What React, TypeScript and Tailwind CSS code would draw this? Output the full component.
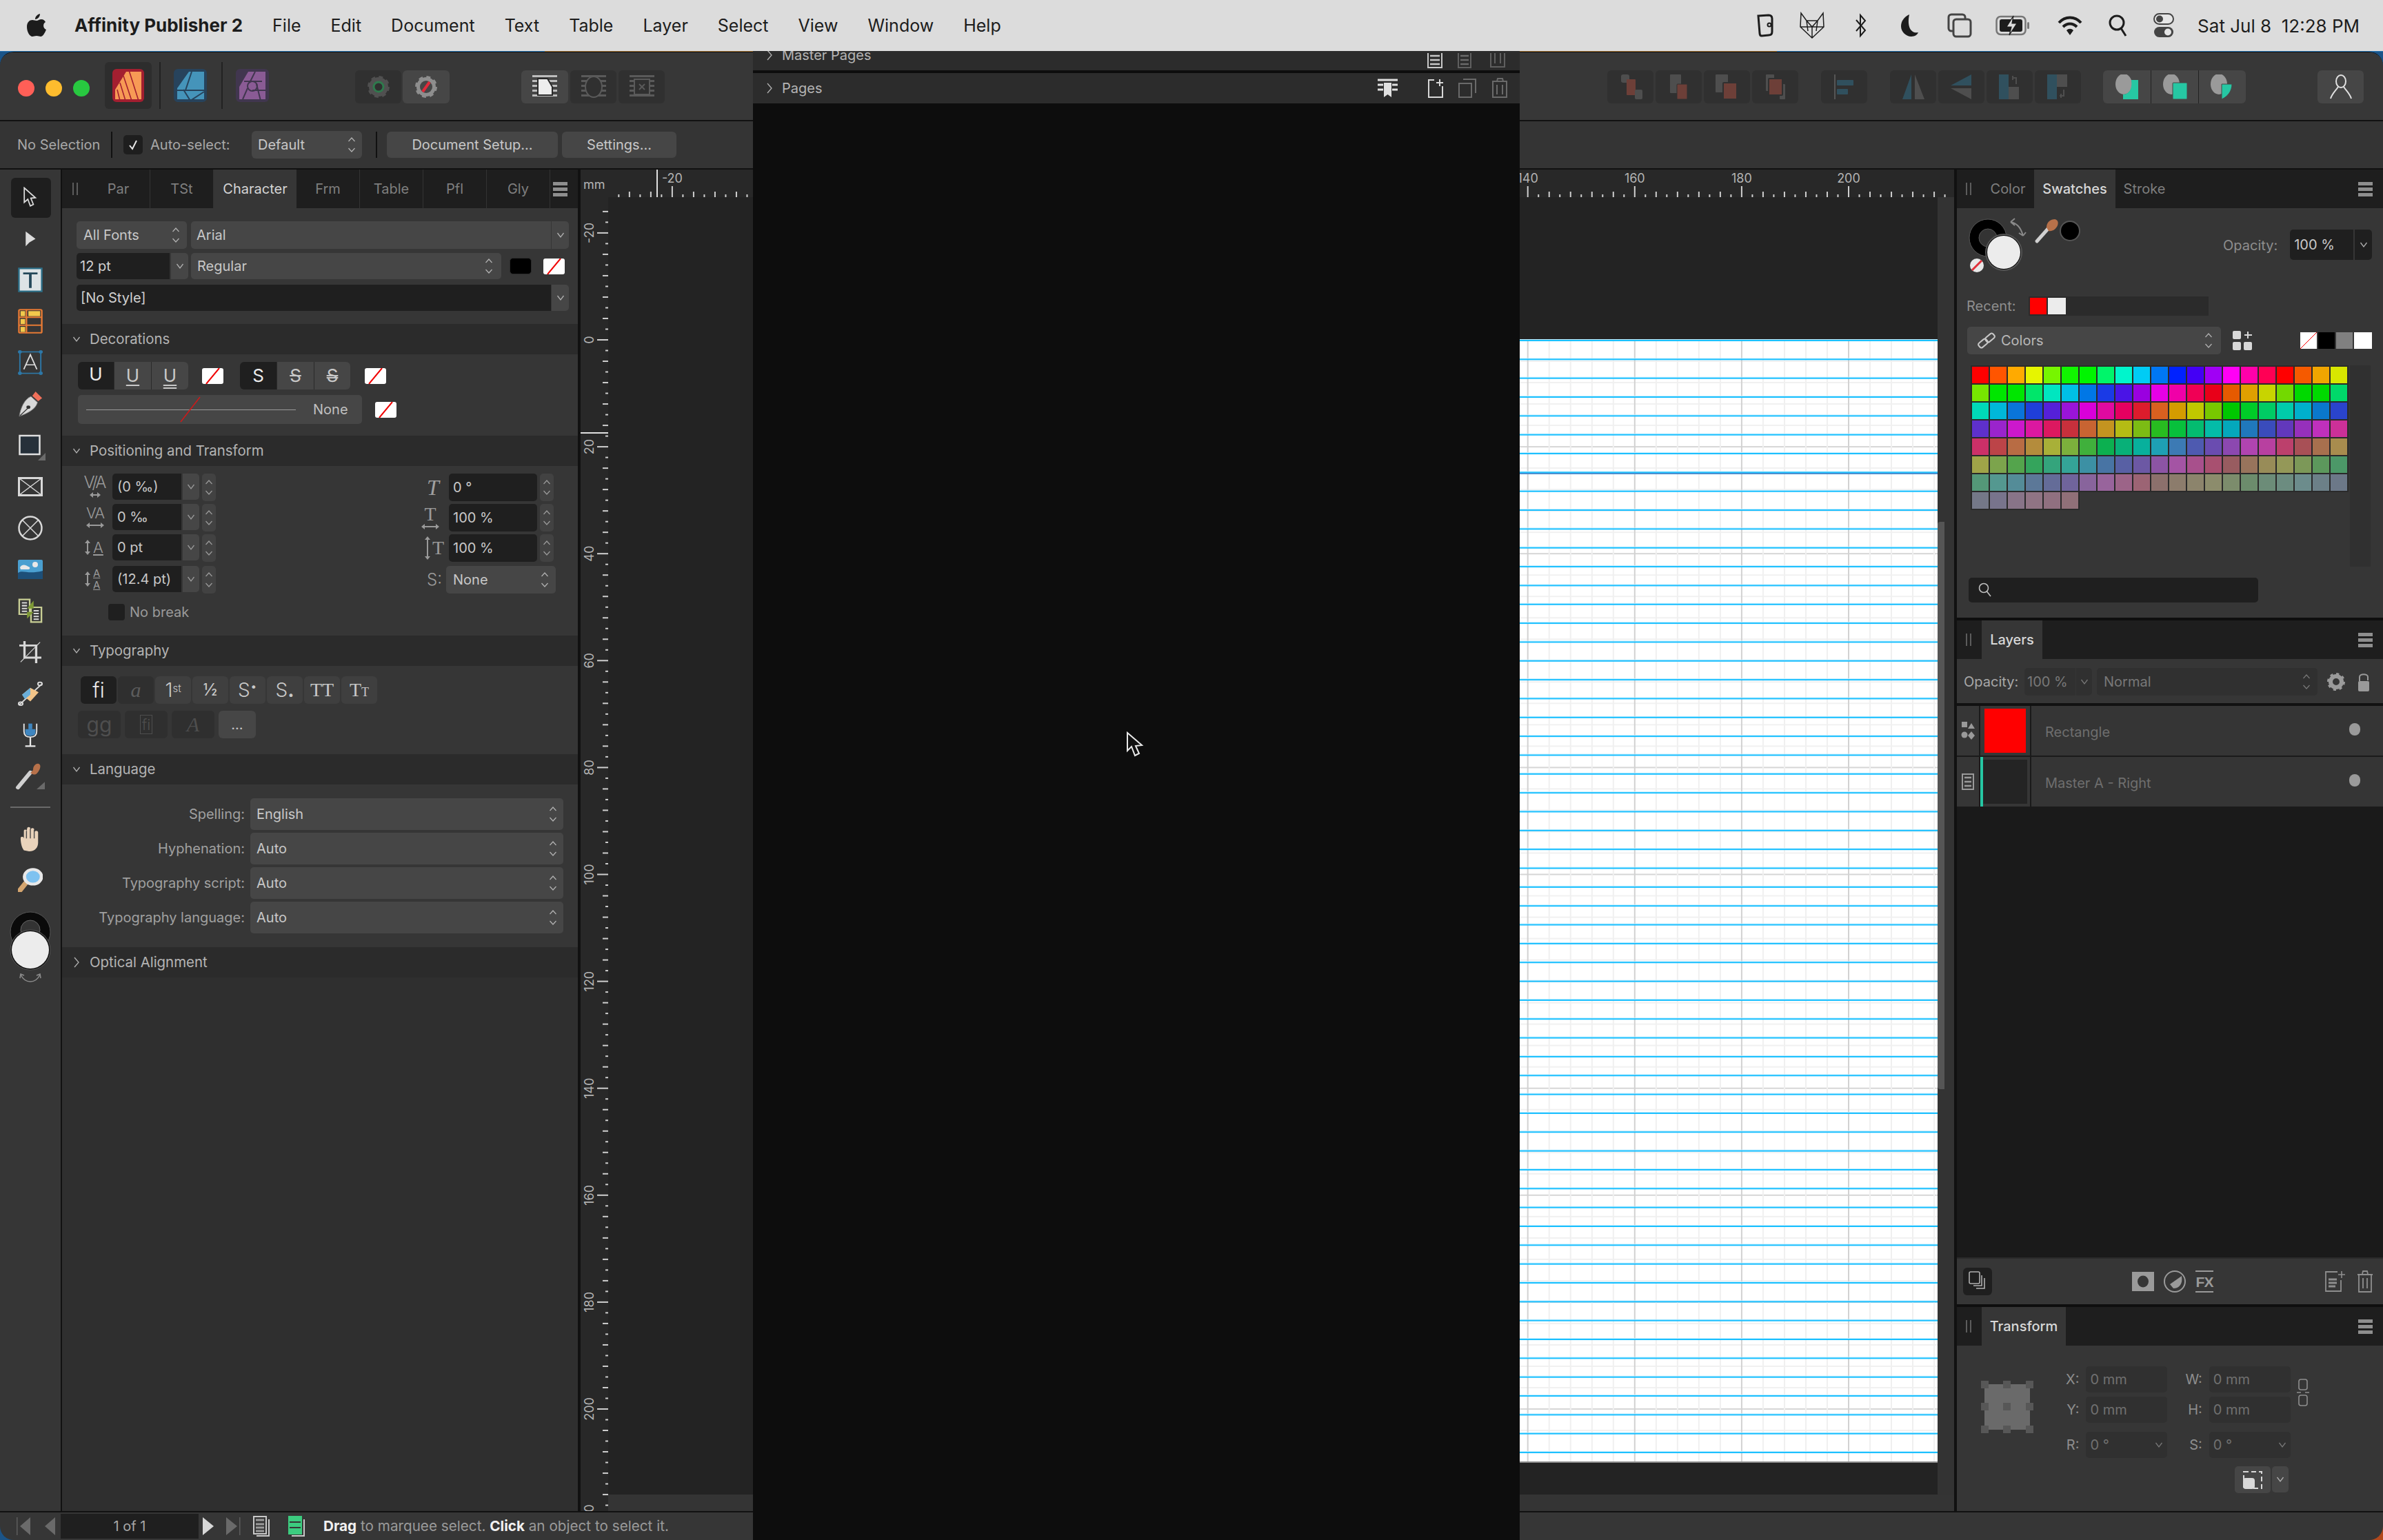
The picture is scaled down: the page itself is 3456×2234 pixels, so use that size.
import React from "react";

const sw: string[] = `#ff0000 #ff5500 #ffaa00 #e6f500 #77f500 #11f500 #00f500 #00f56a #00f5cc #00ccf5 #0077f5 #0022ff #4400f5 #a000f5 #ff00f5 #ff00aa #ff0055 #ff0000 #f55a00 #f0a500 #d8e600
#77e600 #00e600 #00e600 #00e66a #00e6c0 #00c0e6 #0077e6 #1a3ae6 #4a14e6 #9a00e0 #e600e6 #f000a8 #f00055 #e80018 #e65a00 #e0a000 #c8d400 #73d900 #00d900 #00d900 #00d96a
#00d9b8 #00b8d9 #0a75d9 #1f3fd9 #5520d9 #9a14d9 #d900d9 #e00aa0 #e60060 #dc1c2c #d96020 #d49c00 #c0c800 #78c800 #00c800 #00cc28 #00cc64 #00ccaa #00b0cc #0a78cc #2a44cc
#5e30cc #9a24cc #cc18cc #dc18a0 #dc1860 #c8303c #c86432 #c49420 #b4bc14 #7cbc14 #28bc20 #08c03c #04bc70 #04bca8 #04a8bc #2078bc #3a4cbc #6238bc #9630bc #c030bc #cc3098
#cc3068 #bc4448 #b86c44 #b48c3c #a8b038 #7cb03c #40b03c #0cb050 #08b078 #08b09c #1ea0b4 #3c7ab4 #4e5ab0 #6a4cb0 #8c48b0 #b044b0 #b840a0 #bc406c #a85056 #a8704e #a88c4e
#a0a448 #7ca44c #54a44c #34a45c #34a47c #34a498 #3c90a4 #4874a4 #5860a4 #6c58a4 #8c54a4 #a454a4 #a8508c #a85070 #985c60 #98745c #988c58 #949858 #7c9858 #5c985c #4c9868
#549878 #549890 #548c98 #5c7898 #646c98 #70649c #88649c #98649c #9c6488 #9c6474 #8c706c #8c7c6c #8c846c #8c8c6c #7c8c6c #6c8c6c #6c8c78 #6c8c80 #6c8c8c #6c8088 #6c7888
#747888 #78748c #887488 #907484 #907080 #907078`.split(/\s+/);

const UpDown = ({ c = "#b0b0b0" }: { c?: string }) => (
  <svg width="12" height="24" viewBox="0 0 12 24" fill="none" stroke={c} strokeWidth="1.3" className="shrink-0">
    <path d="M1.5 7 L6 2 L10.5 7 M1.5 17 L6 22 L10.5 17" />
  </svg>
);
const Down = ({ c = "#b0b0b0" }: { c?: string }) => (
  <svg width="12" height="10" viewBox="0 0 12 10" fill="none" stroke={c} strokeWidth="1.3" className="shrink-0">
    <path d="M1.5 2 L6 8 L10.5 2" />
  </svg>
);
const Right = () => (
  <svg width="10" height="16" viewBox="0 0 10 16" fill="none" stroke="#b0b0b0" strokeWidth="1.3" className="shrink-0">
    <path d="M2 1 L8 8 L2 15" />
  </svg>
);
const NoneSw = () => (
  <svg width="31" height="23" viewBox="0 0 31 23" className="shrink-0">
    <rect x="0" y="0" width="31" height="23" rx="3" fill="#fff" />
    <path d="M6 23 L25 0" stroke="#f00000" strokeWidth="2" />
  </svg>
);
const Burger = ({ className = "" }: { className?: string }) => (
  <div className={`flex flex-col gap-[3px] w-[21px] ${className}`}>
    <div className="h-[5px] bg-[#8e8e8e]" />
    <div className="h-[5px] bg-[#8e8e8e]" />
    <div className="h-[5px] bg-[#8e8e8e]" />
  </div>
);
const Grip = () => (
  <div className="flex gap-[4px] shrink-0">
    <div className="w-[2px] h-[18px] bg-[#5c5c5c]" />
    <div className="w-[2px] h-[18px] bg-[#5c5c5c]" />
  </div>
);

const ToolBtn = ({ w = 67, on = false, children }: { w?: number; on?: boolean; children?: React.ReactNode }) => (
  <div style={{ width: w }} className={`h-[48px] shrink-0 rounded-[6px] flex items-center justify-center ${on ? "bg-[#464646]" : "bg-[#303030]"}`}>
    {children}
  </div>
);

const Gear = ({ c, inner }: { c: string; inner: React.ReactNode }) => (
  <svg width="34" height="38" viewBox="0 0 34 38">
    <circle cx="17" cy="19" r="13.5" fill="none" stroke={c} strokeWidth="5" strokeDasharray="5.5 5.1" />
    <circle cx="17" cy="19" r="11" fill="none" stroke={c} strokeWidth="6" />
    {inner}
  </svg>
);

const Publisher = () => (
  <svg width="46" height="48" viewBox="0 0 46 48">
    <rect width="46" height="48" rx="6" fill="#a31f30" />
    <path d="M4 44 L4 30 L20 4 L42 4 L42 44 Z" fill="#f79a55" />
    <path d="M24 2 L38 46 M16 10 L28 46 M11 20 L19 46 M7 30 L11 46" stroke="#a31f30" strokeWidth="1.6" />
  </svg>
);
const Designer = () => (
  <svg width="48" height="48" viewBox="0 0 48 48">
    <rect width="48" height="48" rx="6" fill="#27435c" />
    <path d="M5 44 L5 28 L22 4 L44 4 L44 44 Z" fill="#4594ba" />
    <path d="M5 31 L17 31 L26 4 M17 31 L28 31 L44 31 M14 30 L24 46 L44 33" stroke="#27435c" strokeWidth="2" fill="none" />
  </svg>
);
const Photo = () => (
  <svg width="48" height="48" viewBox="0 0 48 48">
    <rect width="48" height="48" rx="6" fill="#41364f" />
    <path d="M5 44 L5 26 L18 4 L43 4 L43 44 Z" fill="#8a5b95" />
    <circle cx="24" cy="25" r="7" fill="none" stroke="#41364f" strokeWidth="2" />
    <path d="M12 18 L38 18 M28 4 L20 20 M43 31 L24 31 M30 22 L36 46 M17 28 L10 44" stroke="#41364f" strokeWidth="2" />
  </svg>
);

const Pv = ({ mode }: { mode: number }) => {
  const c = mode === 0 ? "#bdbdbd" : "#5a5a5a";
  return (
    <svg width="36" height="36" viewBox="0 0 36 36">
      {[0, 7, 14, 21, 28].map((y) => (
        <rect key={y} x="0" y={y + 1} width="36" height="3" fill={c} />
      ))}
      {mode === 0 && <path d="M8 6 L22 6 L29 18 L29 30 L8 30 Z" fill="#ededed" stroke="#2a2a2a" strokeWidth="2" />}
      {mode === 1 && <ellipse cx="18" cy="18" rx="12" ry="15" fill="#303030" stroke="#5a5a5a" strokeWidth="2" />}
      {mode === 2 && (
        <>
          <rect x="7" y="7" width="22" height="22" fill="#303030" stroke="#5a5a5a" strokeWidth="2" />
          <path d="M14 14 L22 22 M22 14 L14 22" stroke="#5a5a5a" strokeWidth="2" />
        </>
      )}
    </svg>
  );
};

const Arr = ({ kind }: { kind: number }) => {
  const g = "#4e4e4e";
  const r = "#6d3f38";
  return (
    <svg width="36" height="36" viewBox="0 0 36 36">
      {kind === 0 && (
        <>
          <rect x="4" y="0" width="12" height="12" rx="3" fill={g} />
          <rect x="12" y="7" width="13" height="23" rx="1" fill={r} />
          <rect x="24" y="22" width="11" height="14" rx="2" fill={g} />
        </>
      )}
      {kind === 1 && (
        <>
          <rect x="5" y="0" width="16" height="27" rx="1" fill={g} />
          <rect x="15" y="14" width="15" height="22" rx="1" fill={r} stroke="#303030" />
        </>
      )}
      {kind === 2 && (
        <>
          <rect x="1" y="0" width="18" height="26" rx="1" fill={g} />
          <rect x="12" y="12" width="20" height="24" rx="1" fill={r} stroke="#303030" strokeWidth="2" />
        </>
      )}
      {kind === 3 && (
        <>
          <rect x="4" y="0" width="12" height="24" rx="1" fill={g} />
          <rect x="24" y="14" width="8" height="22" rx="1" fill={g} />
          <rect x="8" y="6" width="20" height="24" rx="1" fill={r} stroke="#303030" strokeWidth="2" />
        </>
      )}
    </svg>
  );
};
const Flip = ({ kind }: { kind: number }) => {
  const b = "#30505e";
  const g = "#4e4e4e";
  return (
    <svg width="36" height="36" viewBox="0 0 36 36">
      {kind === 0 && (
        <>
          <path d="M15 0 L15 36 L2 36 Z" fill={b} />
          <path d="M20 0 L20 36 L34 36 Z" fill={g} />
        </>
      )}
      {kind === 1 && (
        <>
          <path d="M32 0 L2 16 L32 16 Z" fill={b} />
          <path d="M32 36 L2 20 L32 20 Z" fill={g} />
        </>
      )}
      {kind === 2 && (
        <>
          <rect x="2" y="0" width="14" height="36" fill={b} />
          <rect x="16" y="18" width="15" height="18" fill={g} />
          <path d="M22 5 L27 5 L27 14 M22 2 L22 8" stroke={g} strokeWidth="2" fill="none" />
        </>
      )}
      {kind === 3 && (
        <>
          <rect x="2" y="0" width="14" height="36" fill={b} />
          <rect x="16" y="0" width="15" height="18" fill={g} />
          <path d="M26 22 L26 31 L20 31 M22 28 L22 34" stroke={g} strokeWidth="2" fill="none" />
        </>
      )}
    </svg>
  );
};
const Bool = ({ kind }: { kind: number }) => (
  <svg width="36" height="36" viewBox="0 0 36 36">
    <ellipse cx="13" cy="14" rx="12" ry="15" fill="#9a9a9a" />
    {kind === 0 && <path d="M24 8 L34 8 L34 36 L12 36 L12 29 C20 29 26 22 24 8 Z" fill="#26c7a3" />}
    {kind === 1 && <rect x="15" y="12" width="21" height="24" rx="1" fill="#26c7a3" stroke="#464646" />}
    {kind === 2 && <path d="M17 14 L32 14 C32 24 26 32 17 36 Z" fill="#26c7a3" stroke="#464646" />}
  </svg>
);

const MI = ({ t, b }: { t: string; b?: boolean }) => (
  <span className={`leading-none whitespace-nowrap ${b ? "font-bold text-[26px]" : "font-normal text-[25px]"}`}>{t}</span>
);

const MenuBar = () => (
  <div className="h-[74px] shrink-0 bg-[#dcdcdc] flex items-center text-[#1c1c1c] relative z-20">
    <svg width="28" height="34" viewBox="0 0 28 34" className="ml-[39px] mr-[41px] shrink-0" fill="#1c1c1c">
      <path d="M19 0 C19 4 16 8 12 8 C12 4 15 1 19 0 Z M14 10 C16 10 18 8 21 8 C24 8 26 10 27 12 C23 14 23 21 28 23 C26 28 23 33 20 33 C18 33 17 32 14 32 C11 32 10 33 8 33 C4 33 0 26 0 19 C0 12 4 9 8 9 C10 9 12 10 14 10 Z" />
    </svg>
    <div className="flex items-center gap-[43px]">
      <MI t="Affinity Publisher 2" b />
      <MI t="File" />
      <MI t="Edit" />
      <MI t="Document" />
      <MI t="Text" />
      <MI t="Table" />
      <MI t="Layer" />
      <MI t="Select" />
      <MI t="View" />
      <MI t="Window" />
      <MI t="Help" />
    </div>
    <div className="ml-auto flex items-center pr-[34px]">
      <svg width="26" height="34" viewBox="0 0 26 34" fill="none" stroke="#1c1c1c" strokeWidth="3"><path d="M3 3 L18 2 C22 2 23 4 23 7 L23 26 C23 30 21 31 18 31 L8 32 C6 32 5 30 5 28 Z" /><circle cx="19" cy="16" r="2.5" fill="#dcdcdc" strokeWidth="2" /></svg>
      <svg width="40" height="40" viewBox="0 0 40 40" className="ml-[35px]" fill="none" stroke="#1c1c1c" strokeWidth="1.5"><path d="M4 2 L12 13 L28 13 L36 2 L37 22 L20 38 L3 22 Z M12 13 L20 22 L28 13 M3 22 L20 22 L37 22 M20 22 L20 38 M12 13 L14 28 M28 13 L26 28" /></svg>
      <svg width="20" height="38" viewBox="0 0 20 38" className="ml-[41px]" fill="none" stroke="#1c1c1c" strokeWidth="2"><path d="M3 11 L16 26 L9 34 L9 4 L16 12 L3 27" /></svg>
      <svg width="28" height="32" viewBox="0 0 28 32" className="ml-[46px]" fill="#1c1c1c"><path d="M14 0 C6 4 2 10 2 17 C2 25 9 32 17 32 C22 32 26 29 27 26 C18 28 10 20 14 0 Z" /></svg>
      <svg width="36" height="36" viewBox="0 0 36 36" className="ml-[41px]" fill="none" stroke="#444" strokeWidth="3"><rect x="2" y="2" width="24" height="24" rx="4" /><rect x="9" y="9" width="25" height="25" rx="4" fill="#dcdcdc" /></svg>
      <svg width="50" height="30" viewBox="0 0 50 30" className="ml-[34px]"><rect x="1.5" y="2" width="42" height="26" rx="6" fill="none" stroke="#777" strokeWidth="2.5" /><rect x="6" y="6" width="33" height="18" rx="3" fill="#1c1c1c" /><rect x="46" y="10" width="3" height="10" rx="1.5" fill="#777" /><path d="M26 1 L16 17 L23 17 L20 29 L31 12 L24 12 Z" fill="#dcdcdc" stroke="#1c1c1c" strokeWidth="1.2" /></svg>
      <svg width="36" height="30" viewBox="0 0 36 30" className="ml-[40px]" fill="none" stroke="#1c1c1c" strokeWidth="4"><path d="M2 11 C11 1 25 1 34 11 M8 17 C14 11 22 11 28 17" /><path d="M13 22 L18 29 L23 22 C20 19 16 19 13 22 Z" fill="#1c1c1c" stroke="none" /></svg>
      <svg width="28" height="34" viewBox="0 0 28 34" className="ml-[38px]" fill="none" stroke="#1c1c1c" strokeWidth="3"><circle cx="12" cy="13" r="10" /><path d="M18 21 L25 32" /></svg>
      <svg width="30" height="36" viewBox="0 0 30 36" className="ml-[37px]"><rect x="1" y="1" width="28" height="15" rx="7.5" fill="#e6e6e6" stroke="#444" strokeWidth="2" /><circle cx="9" cy="8.5" r="5" fill="#444" /><rect x="1" y="20" width="28" height="15" rx="7.5" fill="#444" /><circle cx="21" cy="27.5" r="5" fill="#e6e6e6" /></svg>
      <span className="text-[26px] whitespace-pre ml-[34px]">Sat Jul 8  12:28 PM</span>
    </div>
  </div>
);

const Toolbar = () => (
  <div className="h-[100px] shrink-0 flex items-start bg-[#373737] border-b-2 border-[#111] pl-[26px] pt-[14px]">
    <div className="flex gap-[16px] mt-[26px] shrink-0">
      <div className="w-[24px] h-[24px] rounded-full bg-[#ff5f57]" />
      <div className="w-[24px] h-[24px] rounded-full bg-[#febc2e]" />
      <div className="w-[24px] h-[24px] rounded-full bg-[#28c840]" />
    </div>
    <div className="ml-[22px] w-[68px] h-[68px] rounded-[6px] bg-[#2d2d2d] flex items-center justify-center shrink-0">
      <Publisher />
    </div>
    <div className="ml-[11px] w-[2px] h-[68px] bg-[#222] shrink-0" />
    <div className="ml-[19px] mt-[10px] shrink-0"><Designer /></div>
    <div className="ml-[21px] w-[2px] h-[68px] bg-[#222] shrink-0" />
    <div className="ml-[19px] mt-[10px] shrink-0"><Photo /></div>
    <div className="ml-[125px] mt-[12px] flex gap-[2px] shrink-0">
      <ToolBtn><Gear c="#505050" inner={<circle cx="17" cy="19" r="7" fill="#303030" stroke="#2f7a4d" strokeWidth="3" />} /></ToolBtn>
      <ToolBtn on w={68}><Gear c="#8e8e8e" inner={<><circle cx="17" cy="19" r="9" fill="#464646" /><path d="M12 26 L22 12" stroke="#e02a3a" strokeWidth="4" /></>} /></ToolBtn>
    </div>
    <div className="ml-[104px] mt-[12px] flex gap-[3px] shrink-0">
      <ToolBtn on w={68}><Pv mode={0} /></ToolBtn>
      <ToolBtn><Pv mode={1} /></ToolBtn>
      <ToolBtn><Pv mode={2} /></ToolBtn>
    </div>
    <div className="ml-[1367px] mt-[12px] flex gap-[3px] shrink-0">
      {[0, 1, 2, 3].map((k) => <ToolBtn key={k}><Arr kind={k} /></ToolBtn>)}
    </div>
    <div className="ml-[33px] mt-[12px] shrink-0">
      <ToolBtn>
        <svg width="30" height="36" viewBox="0 0 30 36">
          <rect x="0" y="0" width="2" height="36" fill="#555" />
          <rect x="4" y="8" width="24" height="8" rx="1" fill="#30505e" />
          <rect x="4" y="21" width="16" height="8" rx="1" fill="#30505e" />
        </svg>
      </ToolBtn>
    </div>
    <div className="ml-[33px] mt-[12px] flex gap-[3px] shrink-0">
      {[0, 1, 2, 3].map((k) => <ToolBtn key={k}><Flip kind={k} /></ToolBtn>)}
    </div>
    <div className="ml-[32px] mt-[12px] flex rounded-[6px] bg-[#464646] shrink-0">
      {[0, 1, 2].map((k) => (
        <div key={k} className={`w-[69px] h-[48px] flex items-center justify-center ${k ? "border-l border-[#222]" : ""}`}>
          <Bool kind={k} />
        </div>
      ))}
    </div>
    <div className="ml-[104px] mt-[12px] shrink-0">
      <ToolBtn on>
        <svg width="32" height="36" viewBox="0 0 32 36" fill="none" stroke="#e0e0e0" strokeWidth="2">
          <ellipse cx="16" cy="10" rx="7" ry="9" />
          <path d="M12 18 C8 24 3 28 1 35 M20 18 C24 24 29 28 31 35" />
        </svg>
      </ToolBtn>
    </div>
  </div>
);

const BtnLight = ({ w, children }: { w: number; children: React.ReactNode }) => (
  <div style={{ width: w }} className="h-[38px] rounded-[6px] bg-[#464646] text-[20px] text-[#c8c8c8] flex items-center justify-center shrink-0">
    {children}
  </div>
);

const ContextBar = () => (
  <div className="h-[68px] shrink-0 bg-[#343434] flex items-center text-[20px] border-b-2 border-[#111] box-content">
    <span className="ml-[25px] w-[136px] text-[#a8a8a8] whitespace-nowrap">No Selection</span>
    <div className="w-[2px] h-[38px] bg-[#111] shrink-0" />
    <div className="ml-[16px] w-[28px] h-[28px] rounded-[5px] bg-[#1e1e1e] flex items-center justify-center shrink-0">
      <svg width="14" height="16" viewBox="0 0 14 16" fill="none" stroke="#e8e8e8" strokeWidth="2"><path d="M2 9 L6 14 L12 2" /></svg>
    </div>
    <span className="ml-[11px] w-[147px] text-[#a8a8a8] whitespace-nowrap">Auto-select:</span>
    <div className="w-[160px] h-[40px] rounded-[6px] bg-[#464646] flex items-center justify-between pl-[9px] pr-[9px] text-[#c8c8c8] shrink-0"><span>Default</span><UpDown /></div>
    <div className="ml-[20px] w-[2px] h-[38px] bg-[#111] shrink-0" />
    <div className="ml-[14px] flex gap-[6px]">
      <BtnLight w={248}>Document Setup...</BtnLight>
      <BtnLight w={166}>Settings...</BtnLight>
    </div>
  </div>
);

const tools: React.ReactNode[] = [
  <svg key="a" width="22" height="30" viewBox="0 0 30 40" preserveAspectRatio="none" fill="#1e1e1e" stroke="#dcdcdc" strokeWidth="2.4"><path d="M3 2 L3 30 L10 24 L15 37 L21 34 L16 22 L25 21 Z" /></svg>,
  <svg key="b" width="18" height="23" viewBox="0 0 24 30" preserveAspectRatio="none" fill="#dcdcdc"><path d="M3 1 L3 29 L10 22 L22 15 Z" /></svg>,
  <svg key="c" width="36" height="36" viewBox="0 0 38 40" preserveAspectRatio="none"><rect x="1.5" y="1.5" width="35" height="37" fill="#dde3e6" stroke="#2d6f88" strokeWidth="2.5" /><path d="M8 8 L30 8 L30 11 L21 11 L21 33 L17 33 L17 11 L8 11 Z" fill="#24485a" /></svg>,
  <svg key="d" width="36" height="36" viewBox="0 0 38 44" preserveAspectRatio="none" fill="none"><rect x="1.5" y="1.5" width="35" height="41" rx="2" stroke="#e67a34" strokeWidth="2.5" /><path d="M1 15 L37 15 M1 29 L37 29 M13 1 L13 43" stroke="#e67a34" strokeWidth="2.5" /><rect x="4" y="4" width="7" height="9" fill="#f2c94c" /><rect x="16" y="4" width="18" height="9" fill="#f2c94c" /><rect x="4" y="18" width="7" height="9" fill="#f2c94c" /><rect x="4" y="32" width="7" height="9" fill="#f2c94c" /></svg>,
  <svg key="e" width="36" height="36" viewBox="0 0 38 44" preserveAspectRatio="none" fill="none"><rect x="3" y="3" width="32" height="38" stroke="#2d78a8" strokeWidth="2" /><circle cx="3" cy="3" r="3" fill="#2d78a8" /><circle cx="35" cy="3" r="3" fill="#2d78a8" /><circle cx="3" cy="41" r="3" fill="#2d78a8" /><circle cx="35" cy="41" r="3" fill="#2d78a8" /><path d="M9 34 L19 8 L29 34 M12 26 L26 26" stroke="#dcdcdc" strokeWidth="2" /></svg>,
  <svg key="f" width="36" height="36" viewBox="0 0 38 46" preserveAspectRatio="none"><path d="M27 0 L37 12 L31 18 L22 8 Z" fill="#f0705a" /><path d="M20 9 L30 20 C28 30 20 38 2 46 C4 30 10 14 20 9 Z" fill="#d8d8d8" stroke="#777" /><circle cx="16" cy="29" r="3" fill="#333" /><path d="M3 45 L15 31" stroke="#333" strokeWidth="1.5" /></svg>,
  <svg key="g" width="46" height="44" viewBox="0 0 46 44"><rect x="7.5" y="8" width="29" height="27" fill="#26303a" stroke="#e0e0e0" strokeWidth="2.5" /><path d="M45 33 L45 44 L34 44 Z" fill="#6a6a6a" /></svg>,
  <svg key="h" width="36" height="28" viewBox="0 0 36 28" fill="none" stroke="#d8d8d8"><rect x="1.5" y="1.5" width="33" height="25" strokeWidth="3" /><path d="M2 2 L34 26 M34 2 L2 26" strokeWidth="1.5" /></svg>,
  <svg key="i" width="36" height="36" viewBox="0 0 36 36" fill="none" stroke="#d8d8d8"><circle cx="18" cy="18" r="16.5" strokeWidth="2.5" /><path d="M6 6 L30 30 M30 6 L6 30" strokeWidth="1.5" /></svg>,
  <svg key="j" width="36" height="28" viewBox="0 0 36 28"><rect width="36" height="28" rx="2" fill="#4a9fd0" /><circle cx="25" cy="7" r="4" fill="#e8e8e8" /><path d="M3 11 C6 6 11 7 15 10 C18 10 18 14 15 14 L4 14 Z" fill="#e8e8e8" /><path d="M0 19 C8 14 14 22 36 16 L36 28 L0 28 Z" fill="#1d4f78" /></svg>,
  <svg key="k" width="36" height="36" viewBox="0 0 38 44" preserveAspectRatio="none" fill="none"><path d="M2 2 L18 2 L18 28 L2 28 Z M20 16 L36 16 L36 42 L20 42 Z" stroke="#c9cf95" strokeWidth="2.5" /><path d="M6 8 L14 8 M6 13 L14 13 M6 18 L14 18 M6 23 L14 23 M24 22 L32 22 M24 27 L32 27 M24 32 L32 32 M24 37 L32 37" stroke="#d8d8d8" strokeWidth="2.5" /><path d="M24 4 L24 18 L14 18 Z M14 24 L24 24 L14 36 Z" fill="#7e9a35" /></svg>,
  <svg key="l" width="32" height="32" viewBox="0 0 34 40" preserveAspectRatio="none" fill="none" stroke="#d8d8d8" strokeWidth="3.5"><path d="M8 0 L8 30 L34 30 M0 8 L26 8 L26 40" /><path d="M2 38 L32 2" strokeWidth="1.2" /></svg>,
  <svg key="m" width="36" height="36" viewBox="0 0 36 44" preserveAspectRatio="none"><path d="M2 42 L34 6" stroke="#ddd" strokeWidth="2" /><circle cx="4" cy="40" r="3" fill="none" stroke="#ddd" strokeWidth="2" /><circle cx="32" cy="5" r="3" fill="none" stroke="#ddd" strokeWidth="2" /><path d="M6 24 L18 12 L30 20 L18 36 Z" fill="#f3c488" /><path d="M6 24 L18 12 L18 24 L10 32 Z" fill="#6aaed8" /></svg>,
  <svg key="n" width="24" height="36" viewBox="0 0 26 44" preserveAspectRatio="none" fill="none"><path d="M3 2 L3 16 C3 24 8 26 13 26 C18 26 23 24 23 16 L23 2" stroke="#e8e8e8" strokeWidth="2" /><path d="M5 12 L21 12 L21 18 C21 22 17 24 13 24 C9 24 5 22 5 18 Z" fill="#3f86c0" /><path d="M13 2 L13 12" stroke="#3f86c0" strokeWidth="6" /><path d="M13 26 L13 41 M5 42 L21 42" stroke="#e8e8e8" strokeWidth="2.5" /></svg>,
  <svg key="o" width="44" height="40" viewBox="0 0 44 44" preserveAspectRatio="none"><path d="M4 40 L22 16" stroke="#d0d0d0" strokeWidth="6" strokeLinecap="round" /><path d="M26 12 C26 5 30 2 33 2 C36 2 38 6 35 12 C32 18 30 20 26 19 L22 17 Z" fill="#b7714a" /><path d="M43 31 L43 43 L31 43 Z" fill="#6a6a6a" /></svg>,
];

const ToolsCol = () => (
  <div className="w-[90px] shrink-0 border-r-2 border-[#111] bg-[#363636] flex flex-col items-center pt-[10px] relative">
    <div className="absolute left-[16px] top-[12px] w-[58px] h-[58px] rounded-[6px] bg-[#1e1e1e]" />
    {tools.map((t, i) => (
      <div key={i} className="relative h-[60px] w-full flex items-center justify-center shrink-0">{t}</div>
    ))}
    <div className="w-[58px] h-[2px] bg-[#6a6a6a] mt-[14px] shrink-0" />
    <div className="h-[59px] mt-[15px] flex items-center justify-center shrink-0">
      <svg width="30" height="36" viewBox="0 0 32 46" preserveAspectRatio="none"><path d="M6 44 C2 38 1 28 1 22 C1 18 5 18 6 22 L6 8 C6 5 10 5 10 8 L11 4 C11 0 16 0 16 4 L17 5 C17 2 22 2 22 6 L23 10 C23 7 28 7 28 11 L28 30 C28 38 24 46 14 46 Z" fill="#e9d3bb" /><path d="M10 8 L10 22 M16 4 L16 22 M22 6 L22 22" stroke="#4a4a4a" strokeWidth="1.5" /></svg>
    </div>
    <div className="h-[59px] flex items-center justify-center shrink-0">
      <svg width="36" height="36" viewBox="0 0 38 44" preserveAspectRatio="none"><path d="M3 41 L12 28" stroke="#d4a56f" strokeWidth="8" strokeLinecap="round" /><circle cx="23" cy="17" r="13" fill="#7ec2f0" stroke="#e8e8e8" strokeWidth="5" /></svg>
    </div>
    <div className="mt-[17px] flex flex-col items-center shrink-0 w-[60px]">
      <svg width="60" height="86" viewBox="0 0 60 86">
        <circle cx="30" cy="30" r="29" fill="#0a0a0a" stroke="#555" />
        <circle cx="30" cy="27" r="14" fill="#333" stroke="#666" />
        <circle cx="30" cy="56" r="29.5" fill="#555" />
        <circle cx="30" cy="56" r="28.5" fill="#111" />
        <circle cx="30" cy="56" r="27" fill="#ececec" />
      </svg>
      <svg width="32" height="14" viewBox="0 0 32 14" fill="none" stroke="#8a8a8a" strokeWidth="1.6" className="mt-[4px]"><path d="M2 2 C6 10 12 12 16 12 C20 12 26 10 30 2 M1 7 L2 1 L7 3 M31 7 L30 1 L25 3" /></svg>
    </div>
  </div>
);

const Section = ({ t, open = true }: { t: string; open?: boolean }) => (
  <div className="h-[44px] shrink-0 bg-[#2b2b2b] flex items-center text-[20.4px] text-[#b4b4b4]">
    <div className="w-[40px] flex justify-center pl-[2px]">{open ? <Down /> : <Right />}</div>
    <span className="whitespace-nowrap">{t}</span>
  </div>
);

const Tab = ({ t, w, on }: { t: string; w: number; on?: boolean }) => (
  <div style={{ width: w }} className={`h-full flex items-center justify-center shrink-0 text-[20px] ${on ? "bg-[#363636] text-[#d4d4d4]" : "text-[#7e7e7e] border-r border-[#333]"}`}>
    {t}
  </div>
);

const Seg = ({ t, on, w = 54, cl = "" }: { t: React.ReactNode; on?: boolean; w?: number; cl?: string }) => (
  <div style={{ width: w }} className={`h-[40px] flex items-center justify-center text-[26px] leading-none shrink-0 ${on ? "bg-[#1f1f1f] text-[#ececec]" : "bg-[#464646] text-[#c8c8c8]"} ${cl}`}>
    {t}
  </div>
);

const PosInput = ({ v }: { v: string }) => (
  <div className="flex items-start shrink-0">
    <div className="w-[100px] h-[38px] rounded-l-[5px] bg-[#1f1f1f] text-[#c8c8c8] text-[20px] flex items-center pl-[7px] whitespace-nowrap">{v}</div>
    <div className="ml-[2px] w-[24px] h-[38px] rounded-r-[5px] bg-[#464646] flex items-center justify-center"><Down c="#999" /></div>
    <div className="ml-[4px] w-[20px] h-[40px] rounded-[5px] bg-[#424242] flex items-center justify-center"><UpDown c="#999" /></div>
  </div>
);
const PosR = ({ v }: { v: string }) => (
  <div className="flex items-start shrink-0">
    <div className="w-[128px] h-[40px] rounded-[5px] bg-[#1f1f1f] text-[#c8c8c8] text-[20px] flex items-center pl-[6px]">{v}</div>
    <div className="ml-[4px] w-[20px] h-[40px] rounded-[5px] bg-[#424242] flex items-center justify-center"><UpDown c="#999" /></div>
  </div>
);
const HArrow = ({ w = 26 }: { w?: number }) => (
  <svg width={w} height="10" viewBox={`0 0 ${w} 10`} fill="#9a9a9a"><path d={`M0 5 L5 1 L5 4 L${w - 5} 4 L${w - 5} 1 L${w} 5 L${w - 5} 9 L${w - 5} 6 L5 6 L5 9 Z`} /></svg>
);
const VArrow = ({ h = 26 }: { h?: number }) => (
  <svg width="10" height={h} viewBox={`0 0 10 ${h}`} fill="#9a9a9a"><path d={`M5 0 L9 5 L6 5 L6 ${h - 5} L9 ${h - 5} L5 ${h} L1 ${h - 5} L4 ${h - 5} L4 5 L1 5 Z`} /></svg>
);

const LangRow = ({ l, v }: { l: string; v: string }) => (
  <div className="flex items-center h-[46px] mb-[4px] shrink-0">
    <span className="w-[273px] text-right pr-[8px] text-[20px] text-[#a0a0a0] whitespace-nowrap">{l}</span>
    <div className="w-[454px] h-[46px] rounded-[5px] bg-[#464646] flex items-center justify-between pl-[9px] pr-[9px] text-[20px] text-[#c8c8c8]"><span>{v}</span><UpDown /></div>
  </div>
);

const LeftPanel = () => (
  <div className="w-[752px] shrink-0 bg-[#2f2f2f] border-r-4 border-[#111] flex flex-col">
    <div className="h-[56px] shrink-0 bg-[#1e1e1e] flex items-center relative">
      <div className="w-[36px] pl-[15px]"><Grip /></div>
      <Tab t="Par" w={92} />
      <Tab t="TSt" w={92} />
      <Tab t="Character" w={120} on />
      <Tab t="Frm" w={92} />
      <Tab t="Table" w={92} />
      <Tab t="Pfl" w={92} />
      <Tab t="Gly" w={92} />
      <Burger className="ml-[4px]" />
    </div>

    <div className="h-[168px] shrink-0 bg-[#363636] pt-[19px] pl-[21px] text-[20px]">
      <div className="flex h-[40px] gap-[6px]">
        <div className="w-[160px] rounded-[5px] bg-[#464646] flex items-center justify-between pl-[10px] pr-[10px] text-[#c8c8c8]"><span>All Fonts</span><UpDown /></div>
        <div className="w-[522px] rounded-l-[5px] bg-[#464646] flex items-center pl-[8px] text-[#c8c8c8]">Arial</div>
        <div className="w-[25px] -ml-[5px] rounded-r-[5px] bg-[#464646] flex items-center justify-center"><Down /></div>
      </div>
      <div className="flex h-[38px] mt-[6px] items-center">
        <div className="w-[135px] h-full rounded-l-[5px] bg-[#1f1f1f] flex items-center pl-[5px] text-[#d0d0d0]">12 pt</div>
        <div className="ml-[2px] w-[25px] h-full rounded-r-[5px] bg-[#464646] flex items-center justify-center"><Down /></div>
        <div className="ml-[4px] w-[450px] h-full rounded-[5px] bg-[#464646] flex items-center justify-between pl-[9px] pr-[12px] text-[#c8c8c8]"><span>Regular</span><UpDown /></div>
        <div className="ml-[12px] w-[32px] h-[24px] rounded-[5px] bg-black border border-[#2c2c2c]" />
        <div className="ml-[17px]"><NoneSw /></div>
      </div>
      <div className="flex h-[38px] mt-[8px]">
        <div className="w-[688px] rounded-l-[5px] bg-[#1f1f1f] flex items-center pl-[6px] text-[#d0d0d0]">[No Style]</div>
        <div className="ml-[1px] w-[25px] rounded-r-[5px] bg-[#464646] flex items-center justify-center"><Down /></div>
      </div>
    </div>

    <Section t="Decorations" />
    <div className="h-[118px] shrink-0 bg-[#363636] pl-[23px] pt-[11px]">
      <div className="flex items-center h-[40px]">
        <Seg t={<span className="-mt-[4px]">U</span>} on w={52} cl="rounded-l-[6px]" />
        <Seg t={<span className="underline underline-offset-4 decoration-2">U</span>} cl="border-l border-[#2a2a2a]" />
        <Seg t={<span className="underline decoration-double underline-offset-4">U</span>} cl="border-l border-[#2a2a2a] rounded-r-[6px]" />
        <div className="ml-[20px]"><NoneSw /></div>
        <div className="ml-[24px] flex">
          <Seg t="S" on w={53} cl="rounded-l-[6px]" />
          <Seg t={<span className="line-through">S</span>} cl="border-l border-[#2a2a2a]" />
          <Seg t={<span className="line-through decoration-double">S</span>} w={53} cl="border-l border-[#2a2a2a] rounded-r-[6px]" />
        </div>
        <div className="ml-[21px]"><NoneSw /></div>
      </div>
      <div className="flex items-center h-[42px] mt-[8px]">
        <div className="w-[412px] h-full rounded-[5px] bg-[#464646] flex items-center pl-[12px] text-[20px] text-[#c0c0c0] relative">
          <div className="w-[304px] h-[1px] bg-[#9a9a9a]" />
          <svg width="30" height="38" viewBox="0 0 30 38" className="absolute left-[148px] top-[2px]"><path d="M1 37 L29 1" stroke="#d01818" strokeWidth="1.5" /></svg>
          <span className="ml-[25px]">None</span>
        </div>
        <div className="ml-[19px]"><NoneSw /></div>
      </div>
    </div>

    <Section t="Positioning and Transform" />
    <div className="h-[246px] shrink-0 bg-[#363636] relative text-[#9a9a9a]">
      <div className="flex pt-[11px] pl-[32px]">
        <div className="w-[41px] flex flex-col items-start shrink-0">
          <div className="h-[38px] w-[32px] flex flex-col items-center text-[24px] leading-[26px] font-light"><span className="tracking-[-3px] -ml-[3px]">V/A</span><HArrow w={16} /></div>
          <div className="h-[38px] mt-[6px] w-[32px] flex flex-col items-center text-[22px] leading-[26px] font-light"><span className="tracking-[-1px]">VA</span><HArrow /></div>
          <div className="h-[38px] mt-[6px] w-[32px] flex items-center text-[22px] gap-[3px] font-light"><VArrow h={22} /><span className="underline">A</span></div>
          <div className="h-[38px] mt-[8px] w-[32px] flex items-center gap-[3px]"><VArrow h={22} /><div className="flex flex-col text-[15px] leading-[17px]"><span className="underline">A</span><span className="underline">A</span></div></div>
        </div>
        <div className="flex flex-col shrink-0">
          <PosInput v="(0 ‰)" />
          <div className="mt-[4px]"><PosInput v="0 ‰" /></div>
          <div className="mt-[4px]"><PosInput v="0 pt" /></div>
          <div className="mt-[6px]"><PosInput v="(12.4 pt)" /></div>
        </div>
        <div className="ml-[292px] flex flex-col shrink-0">
          <div className="h-[40px] flex items-center"><span className="w-[46px] pl-[14px] font-['Liberation_Serif',serif] italic text-[32px] text-[#a0a0a0]">T</span><PosR v="0 °" /></div>
          <div className="mt-[4px] h-[40px] flex items-center"><div className="w-[46px] flex flex-col items-center font-['Liberation_Serif',serif] text-[28px] leading-[26px] pr-[8px]"><span>T</span><HArrow /></div><PosR v="100 %" /></div>
          <div className="mt-[4px] h-[40px] flex items-center"><div className="w-[46px] flex items-center pl-[10px] font-['Liberation_Serif',serif] text-[28px] gap-[2px]"><VArrow h={34} /><span>T</span></div><PosR v="100 %" /></div>
          <div className="mt-[6px] h-[40px] flex items-center -ml-[4px]">
            <span className="w-[46px] pl-[18px] text-[24px] font-light">S:</span>
            <div className="w-[159px] h-[40px] rounded-[5px] bg-[#464646] flex items-center justify-between pl-[10px] pr-[10px] text-[20px] text-[#c8c8c8]"><span>None</span><UpDown /></div>
          </div>
        </div>
      </div>
      <div className="mt-[12px] ml-[67px] flex items-center text-[20px] gap-[7px]">
        <div className="w-[24px] h-[24px] rounded-[4px] bg-[#1f1f1f]" />
        <span>No break</span>
      </div>
    </div>

    <Section t="Typography" />
    <div className="h-[128px] shrink-0 bg-[#363636] pt-[15px] pl-[27px]">
      <div className="flex gap-[2px]">
        <Seg t="fi" on w={52} cl="rounded-[6px] font-light !text-[30px]" />
        <Seg t={<span className="font-['Liberation_Serif',serif] italic text-[#5c5c5c] text-[30px]">a</span>} w={52} cl="rounded-[6px] !bg-[#2f2f2f]" />
        {[
          <span key="1" className="font-light text-[28px]">1<sup className="text-[15px]">st</sup></span>,
          <span key="2" className="text-[24px]">½</span>,
          <span key="3" className="font-light text-[28px]">S<sup className="text-[18px]">•</sup></span>,
          <span key="4" className="font-light text-[28px]">S<span className="font-bold">.</span></span>,
          <span key="5" className="font-['Liberation_Serif',serif] text-[28px]">TT</span>,
          <span key="6" className="font-['Liberation_Serif',serif] text-[28px]">T<span className="text-[18px]">T</span></span>,
        ].map((x, i) => <Seg key={i} t={x} w={52} cl="rounded-[6px] !bg-[#3f3f3f]" />)}
      </div>
      <div className="flex gap-[6px] mt-[10px] -ml-[4px]">
        <Seg t={<span className="text-[#4e4e4e] text-[30px]">gg</span>} w={62} cl="rounded-[6px] !bg-[#2f2f2f]" />
        <Seg t={<span className="text-[#4e4e4e] font-light border border-[#4e4e4e] text-[22px] leading-[26px] px-[2px]">fi</span>} w={62} cl="rounded-[6px] !bg-[#2f2f2f]" />
        <Seg t={<span className="text-[#4e4e4e] font-['Liberation_Serif',serif] italic text-[30px]">A</span>} w={62} cl="rounded-[6px] !bg-[#2f2f2f]" />
        <Seg t={<span className="text-[20px]">...</span>} w={54} cl="rounded-[6px]" />
      </div>
    </div>

    <Section t="Language" />
    <div className="h-[236px] shrink-0 bg-[#363636] pt-[20px]">
      <LangRow l="Spelling:" v="English" />
      <LangRow l="Hyphenation:" v="Auto" />
      <LangRow l="Typography script:" v="Auto" />
      <LangRow l="Typography language:" v="Auto" />
    </div>
    <Section t="Optical Alignment" open={false} />
  </div>
);

const PX = 7.755;
const hTicks: number[] = [];
for (let m = -36; m <= 220; m += 2) hTicks.push(m);
const vTicks: number[] = [];
for (let m = -24; m <= 220; m += 2) vTicks.push(m);

const HRuler = () => (
  <svg width="1992" height="40" viewBox="0 0 1992 40" className="block shrink-0">
    <rect width="1992" height="40" fill="#282828" />
    {hTicks.map((m) => {
      const x = 288 + m * PX;
      if (x < 40 || x > 1980) return null;
      const h = m % 20 === 0 ? 16 : m % 4 === 0 ? 8 : 4;
      return <rect key={m} x={x - 1} y={40 - h} width="2" height={h} fill="#cfcfcf" />;
    })}
    {hTicks.filter((m) => m % 20 === 0).map((m) => {
      const x = 288 + m * PX;
      if (x < 60 || x > 1980) return null;
      return <text key={m} x={x} y="19" textAnchor="middle" fontSize="18" fill="#b4b4b4" fontFamily="Inter, sans-serif">{m}</text>;
    })}
    <text x="4" y="28" fontSize="18" fill="#b4b4b4" fontFamily="Inter, sans-serif">mm</text>
    <rect x="110" y="0" width="2" height="40" fill="#e0e0e0" />
  </svg>
);
const VRuler = () => (
  <svg width="40" height="1906" viewBox="0 0 40 1906" className="block shrink-0">
    <rect width="40" height="1906" fill="#282828" />
    {vTicks.map((m) => {
      const y = 207 + m * PX;
      if (y < 0) return null;
      const h = m % 20 === 0 ? 16 : m % 4 === 0 ? 8 : 4;
      return <rect key={m} x={40 - h} y={y - 1} width={h} height="2" fill="#cfcfcf" />;
    })}
    {vTicks.filter((m) => m % 20 === 0).map((m) => {
      const y = 207 + m * PX;
      return <text key={m} transform={`translate(19 ${y}) rotate(-90)`} textAnchor="middle" fontSize="18" fill="#b4b4b4" fontFamily="Inter, sans-serif">{m}</text>;
    })}
    <rect x="0" y="341" width="40" height="2" fill="#e0e0e0" />
  </svg>
);

const CELL = 31.02;
const pageV: number[] = [];
for (let i = 0; i * CELL < 1680; i++) pageV.push(i);
const pageH: number[] = [];
for (let i = 0; i * CELL < 1628; i++) pageH.push(i);
const blues: number[] = [];
for (let i = 0; 1.5 + i * 27.34 < 1628; i++) blues.push(i);

const PageGrid = () => (
  <svg width="1680" height="1630" viewBox="0 0 1680 1630" className="block">
    <rect width="1680" height="1630" fill="#fff" />
    {pageH.map((i) => {
      const y = 1 + i * CELL;
      return <rect key={i} x="0" y={y - 1} width="1680" height="2" fill={i % 5 === 0 ? "#d6d6d6" : "#f1f1f1"} />;
    })}
    {pageV.map((i) => {
      const x = i * CELL;
      return <rect key={i} x={x - 1} y="0" width="2" height="1628" fill={i % 5 === 0 ? "#d2d2d2" : "#f0f0f0"} />;
    })}
    {blues.map((i) => (
      <g key={i}>
        <rect x="0" y={i * 27.34} width="1680" height="1" fill="#c8f0ff" />
        <rect x="0" y={1 + i * 27.34} width="1680" height="2" fill="#18bfff" />
      </g>
    ))}
    <rect x="0" y="194" width="1680" height="2" fill="#4a90d0" />
    <rect x="0" y="1628" width="1680" height="2" fill="#909090" />
  </svg>
);

const Canvas = () => (
  <div className="w-[1992px] shrink-0 flex flex-col bg-[#343434]">
    <HRuler />
    <div className="flex flex-1 min-h-0">
      <VRuler />
      <div className="flex-1 flex flex-col min-w-0">
        <div className="flex h-[1882px] shrink-0">
          <div className="w-[1928px] bg-[#232323] pl-[248px] pt-[206px] overflow-hidden">
            <PageGrid />
          </div>
          <div className="w-[24px] pt-[471px] bg-[#333]">
            <div className="w-[10px] h-[823px] rounded-l-[4px] bg-[#555]" />
          </div>
        </div>
      </div>
    </div>
  </div>
);

const PTab = ({ t, w, on, cl = "" }: { t: string; w: number; on?: boolean; cl?: string }) => (
  <div style={{ width: w }} className={`h-full flex items-center justify-center shrink-0 text-[20px] ${on ? "bg-[#363636] text-[#d8d8d8] font-medium" : "text-[#7e7e7e]"} ${cl}`}>{t}</div>
);

const WheelGroup = () => (
  <svg width="180" height="96" viewBox="0 0 180 96">
    <circle cx="31" cy="35" r="27" fill="#000" stroke="#555" />
    <circle cx="31" cy="35" r="13" fill="#333" stroke="#555" />
    <circle cx="54" cy="56" r="27" fill="#555" />
    <circle cx="54" cy="56" r="25" fill="#000" />
    <circle cx="54" cy="56" r="24" fill="#ececec" />
    <circle cx="15" cy="75" r="10" fill="#e8e8e8" />
    <path d="M8 82 L22 68" stroke="#e0303a" strokeWidth="3" />
    <path d="M64 12 C72 14 78 18 82 32 M64 12 L70 7 M64 12 L70 17 M82 32 L76 28 M82 32 L86 27" stroke="#8a8a8a" strokeWidth="2" fill="none" />
    <path d="M102 40 L118 22" stroke="#d0d0d0" strokeWidth="5" strokeLinecap="round" />
    <path d="M116 20 C116 12 122 8 128 8 C133 9 134 14 131 19 C128 24 123 26 119 25 Z" fill="#b7714a" />
    <circle cx="150" cy="25" r="14" fill="#000" stroke="#555" strokeWidth="2" />
  </svg>
);

const RightPanel = () => (
  <div className="flex-1 min-w-0 bg-[#1a1a1a] border-l-4 border-[#111] flex flex-col">
    <div className="h-[56px] shrink-0 bg-[#1e1e1e] flex items-center relative">
      <div className="w-[36px] pl-[13px]"><Grip /></div>
      <PTab t="Color" w={76} />
      <PTab t="Swatches" w={118} on />
      <PTab t="Stroke" w={84} />
      <Burger className="ml-auto mr-[15px]" />
    </div>
    <div className="h-[594px] shrink-0 bg-[#363636] flex flex-col text-[20px]">
      <div className="h-[128px] shrink-0 flex items-start pl-[14px] pt-[8px]">
        <WheelGroup />
        <span className="ml-[192px] mt-[31px] text-[#8e8e8e] whitespace-nowrap">Opacity:</span>
        <div className="ml-[18px] mt-[23px] w-[92px] h-[44px] rounded-l-[5px] bg-[#1f1f1f] flex items-center pl-[6px] text-[#c8c8c8]">100 %</div>
        <div className="ml-[2px] mt-[23px] w-[25px] h-[44px] rounded-r-[5px] bg-[#1f1f1f] flex items-center justify-center"><Down /></div>
      </div>
      <div className="h-[28px] shrink-0 flex items-center pl-[14px]">
        <span className="w-[90px] text-[#8e8e8e]">Recent:</span>
        <div className="w-[261px] h-full bg-[#2b2b2b] flex items-center pl-[2px] gap-[2px]">
          <div className="w-[24px] h-[24px] bg-[#ff0000]" />
          <div className="w-[26px] h-[24px] bg-[#ececec]" />
        </div>
      </div>
      <div className="h-[40px] mt-[16px] shrink-0 flex items-center pl-[15px]">
        <div className="w-[368px] h-full rounded-[5px] bg-[#464646] flex items-center pl-[15px] pr-[12px] text-[#b8b8b8]">
          <svg width="26" height="26" viewBox="0 0 26 26" fill="none" stroke="#c8c8c8" strokeWidth="2"><rect x="1" y="13" width="14" height="8" rx="3" transform="rotate(-40 8 17)" /><rect x="11" y="5" width="14" height="8" rx="3" transform="rotate(-40 18 9)" /></svg>
          <span className="ml-[8px]">Colors</span>
          <div className="ml-auto"><UpDown /></div>
        </div>
        <svg width="30" height="28" viewBox="0 0 30 28" className="ml-[17px]" fill="#d8d8d8"><rect x="0" y="0" width="12" height="12" rx="2" /><rect x="0" y="16" width="12" height="12" rx="2" /><rect x="16" y="16" width="12" height="12" rx="2" /><path d="M21 1 L23 1 L23 5 L28 5 L28 7 L23 7 L23 11 L21 11 L21 7 L17 7 L17 5 L21 5 Z" /></svg>
        <div className="ml-[68px] flex gap-[2px]">
          <svg width="24" height="24" viewBox="0 0 24 24"><rect width="24" height="24" fill="#fff" /><path d="M0 24 L24 0" stroke="#f00" strokeWidth="1" /></svg>
          <div className="w-[24px] h-[24px] bg-black" />
          <div className="w-[24px] h-[24px] bg-[#808080]" />
          <div className="w-[26px] h-[24px] bg-white" />
        </div>
      </div>
      <div className="h-[324px] shrink-0 flex items-start pl-[22px] pt-[18px]">
        <div className="grid grid-cols-[repeat(21,24px)] gap-[2px] w-[544px] shrink-0">
          {sw.map((c, i) => (
            <div key={i} style={{ background: c }} className="w-[24px] h-[24px] outline-2 outline-[#2a2a2a]" />
          ))}
        </div>
        <div className="ml-[4px] w-[30px] h-[292px] bg-[#303030] shrink-0 -mt-[2px]" />
      </div>
      <div className="h-[36px] ml-[17px] w-[420px] rounded-[5px] bg-[#1f1f1f] flex items-center pl-[14px] shrink-0">
        <svg width="20" height="22" viewBox="0 0 20 22" fill="none" stroke="#c0c0c0" strokeWidth="1.6"><circle cx="8" cy="8" r="6.5" /><path d="M12.5 13 L18 20" /></svg>
      </div>
    </div>
    <div className="h-[4px] shrink-0 bg-[#0e0e0e]" />

    <div className="h-[56px] shrink-0 bg-[#1e1e1e] flex items-center">
      <div className="w-[36px] pl-[13px]"><Grip /></div>
      <PTab t="Layers" w={88} on />
      <Burger className="ml-auto mr-[15px]" />
    </div>
    <div className="h-[64px] shrink-0 bg-[#363636] flex items-center pl-[10px] pt-[2px] text-[20px]">
      <span className="text-[#a8a8a8] w-[88px] whitespace-nowrap">Opacity:</span>
      <div className="w-[74px] h-[40px] rounded-l-[5px] bg-[#303030] flex items-center pl-[4px] text-[#787878] whitespace-nowrap">100 %</div>
      <div className="ml-[1px] w-[23px] h-[40px] rounded-r-[5px] bg-[#303030] flex items-center justify-center"><Down c="#777" /></div>
      <div className="ml-[7px] w-[320px] h-[40px] rounded-[5px] bg-[#303030] flex items-center justify-between pl-[10px] pr-[10px] text-[#787878]"><span>Normal</span><UpDown c="#777" /></div>
      <svg width="26" height="26" viewBox="0 0 26 26" className="ml-[14px]"><circle cx="13" cy="13" r="8" fill="none" stroke="#9a9a9a" strokeWidth="6" /><circle cx="13" cy="13" r="11" fill="none" stroke="#9a9a9a" strokeWidth="4" strokeDasharray="4 4.6" /></svg>
      <svg width="18" height="28" viewBox="0 0 18 28" className="ml-[18px]"><rect x="1" y="13" width="16" height="15" rx="2" fill="#9a9a9a" /><path d="M3 13 L3 7 C3 2 15 2 15 7 L15 12" stroke="#9a9a9a" strokeWidth="2" fill="none" /></svg>
    </div>
    <div className="h-[4px] shrink-0 bg-[#111]" />
    <div className="h-[72px] shrink-0 flex gap-[2px] text-[20px] text-[#6e6e6e]">
      <div className="w-[32px] bg-[#363636] flex items-center justify-center">
        <svg width="20" height="26" viewBox="0 0 20 26" fill="#9a9a9a"><rect x="1" y="0" width="8" height="8" /><path d="M15 2 L20 10 L10 10 Z" /><circle cx="5" cy="19" r="4.5" /><path d="M15 14 L20 20 L15 26 L10 20 Z" /></svg>
      </div>
      <div className="w-[72px] bg-[#363636] flex items-center justify-center"><div className="w-[60px] h-[64px] bg-[#ff0000]" /></div>
      <div className="flex-1 bg-[#353535] flex items-center pl-[20px] relative">
        <span className="mt-[4px]">Rectangle</span>
        <div className="absolute right-[33px] top-[25px] w-[16px] h-[18px] rounded-full bg-[#9a9a9a]" />
      </div>
    </div>
    <div className="h-[2px] shrink-0 bg-[#1a1a1a]" />
    <div className="h-[72px] shrink-0 flex gap-[2px] text-[20px] text-[#6e6e6e]">
      <div className="w-[32px] bg-[#363636] flex items-center justify-center">
        <svg width="18" height="24" viewBox="0 0 18 24" fill="none" stroke="#9a9a9a" strokeWidth="2"><rect x="1" y="1" width="16" height="22" /><path d="M4 6 L14 6 M4 12 L14 12 M4 18 L14 18" strokeWidth="2.5" /></svg>
      </div>
      <div className="w-[72px] bg-[#363636] flex items-center">
        <div className="w-[4px] h-full bg-[#26c7a3]" />
        <div className="w-[64px] h-[64px] bg-[#242424]" />
      </div>
      <div className="flex-1 bg-[#353535] flex items-center pl-[20px] relative">
        <span className="mt-[4px]">Master A - Right</span>
        <div className="absolute right-[33px] top-[25px] w-[16px] h-[18px] rounded-full bg-[#9a9a9a]" />
      </div>
    </div>
    <div className="flex-1 min-h-0 bg-[#1a1a1a]" />
    <div className="h-[68px] shrink-0 bg-[#363636] flex items-center pl-[9px] border-t-[2px] border-[#2a2a2a]">
      <div className="w-[42px] h-[40px] rounded-[6px] bg-[#1f1f1f] flex items-center justify-center">
        <svg width="26" height="30" viewBox="0 0 26 30" fill="none" stroke="#b0b0b0" strokeWidth="1.6"><rect x="1" y="1" width="15" height="17" rx="2" /><path d="M19 6 L19 21 L7 21 M23 10 L23 25 L11 25" /></svg>
      </div>
      <svg width="32" height="28" viewBox="0 0 32 28" className="ml-[203px]"><rect width="32" height="28" fill="#9a9a9a" /><ellipse cx="16" cy="14" rx="8" ry="8.5" fill="#363636" /></svg>
      <svg width="32" height="32" viewBox="0 0 32 32" className="ml-[14px]"><ellipse cx="16" cy="16" rx="15" ry="15" fill="none" stroke="#9a9a9a" strokeWidth="2" /><path d="M26 8 C28 20 22 26 14 26 L9 20 Z" fill="#9a9a9a" /></svg>
      <div className="ml-[14px] w-[26px] h-[32px] border-y-2 border-[#9a9a9a] flex items-center justify-center font-['Liberation_Sans',sans-serif] font-bold text-[#9a9a9a] text-[21px] tracking-[-1px] leading-none">FX</div>
      <svg width="30" height="32" viewBox="0 0 30 32" className="ml-[161px]" fill="none" stroke="#8e8e8e" strokeWidth="1.8"><path d="M19 2 L2 2 L2 30 L24 30 L24 14" /><path d="M6 13 L18 13 M6 18 L18 18 M6 23 L16 23" strokeWidth="3" /><path d="M25 1 L25 11 M20 6 L30 6" strokeWidth="1.6" /></svg>
      <svg width="24" height="32" viewBox="0 0 24 32" className="ml-[17px]" fill="none" stroke="#8e8e8e" strokeWidth="1.8"><path d="M1 6 L23 6 M8 5 L9 1 L15 1 L16 5 M3 7 L3 31 L21 31 L21 7 M9 11 L9 26 M15 11 L15 26" /></svg>
    </div>
    <div className="h-[4px] shrink-0 bg-[#0e0e0e]" />
    <div className="h-[56px] shrink-0 bg-[#1e1e1e] flex items-center">
      <div className="w-[36px] pl-[13px]"><Grip /></div>
      <PTab t="Transform" w={122} on />
      <Burger className="ml-auto mr-[15px]" />
    </div>
    <div className="h-[240px] shrink-0 bg-[#363636] relative text-[20px] text-[#8e8e8e]">
      <div className="flex items-start pt-[30px] pl-[35px]">
        <svg width="76" height="76" viewBox="0 0 76 76" className="mt-[21px] shrink-0">
          <rect x="5" y="5" width="66" height="66" fill="#6a6a6a" />
          {[0, 32, 65].map((x) => [0, 32, 65].map((y) => <rect key={`${x}-${y}`} x={x} y={y} width="11" height="11" fill="#575757" />))}
        </svg>
        <div className="ml-[47px] grid grid-cols-[auto_118px_auto_118px] gap-x-[10px] gap-y-[6px] items-center">
          <span className="text-right">X:</span>
          <div className="h-[38px] rounded-[5px] bg-[#303030] flex items-center pl-[6px] text-[#707070]">0 mm</div>
          <span className="text-right ml-[16px]">W:</span>
          <div className="h-[38px] rounded-[5px] bg-[#303030] flex items-center pl-[6px] text-[#707070]">0 mm</div>
          <span className="text-right">Y:</span>
          <div className="h-[38px] rounded-[5px] bg-[#303030] flex items-center pl-[6px] text-[#707070]">0 mm</div>
          <span className="text-right">H:</span>
          <div className="h-[38px] rounded-[5px] bg-[#303030] flex items-center pl-[6px] text-[#707070]">0 mm</div>
          <span className="text-right mt-[7px]">R:</span>
          <div className="h-[38px] mt-[7px] rounded-[5px] bg-[#303030] flex items-center justify-between pl-[6px] pr-[6px] text-[#707070]"><span>0 °</span><Down c="#777" /></div>
          <span className="text-right mt-[7px]">S:</span>
          <div className="h-[38px] mt-[7px] rounded-[5px] bg-[#303030] flex items-center justify-between pl-[6px] pr-[6px] text-[#707070]"><span>0 °</span><Down c="#777" /></div>
        </div>
        <svg width="18" height="40" viewBox="0 0 18 40" className="ml-[9px] mt-[18px] shrink-0" fill="none" stroke="#8e8e8e" strokeWidth="1.6"><rect x="3" y="1" width="12" height="15" rx="3" /><rect x="3" y="24" width="12" height="15" rx="3" /><path d="M0 20 L6 20 M12 20 L18 20" /></svg>
      </div>
      <div className="flex gap-[2px] mt-[12px] ml-[403px]">
        <div className="w-[52px] h-[39px] rounded-[5px] bg-[#464646] flex items-center justify-center">
          <svg width="28" height="26" viewBox="0 0 28 26" fill="none" stroke="#d8d8d8" strokeWidth="2" strokeDasharray="7 4"><rect x="1" y="1" width="26" height="24" /><rect x="1" y="11" width="15" height="14" rx="3" fill="#d8d8d8" strokeDasharray="none" /></svg>
        </div>
        <div className="w-[24px] h-[38px] rounded-[5px] bg-[#464646] flex items-center justify-center"><Down /></div>
      </div>
    </div>
  </div>
);

const StatusBar = () => (
  <div className="h-[42px] shrink-0 bg-[#363636] border-t-2 border-[#111] flex items-center text-[20.7px] text-[#9a9a9a]">
    <svg width="64" height="26" viewBox="0 0 64 26" className="ml-[24px] shrink-0" fill="#5c5c5c"><rect x="0" y="0" width="1.5" height="26" /><path d="M20 0 L20 26 L5 13 Z M56 0 L56 26 L41 13 Z" fill="#6a6a6a" /></svg>
    <div className="w-[200px] h-[36px] bg-[#1f1f1f] flex items-center justify-center text-[#a8a8a8] text-[20px]">1 of 1</div>
    <svg width="56" height="26" viewBox="0 0 56 26" className="ml-[6px] shrink-0"><path d="M0 0 L16 13 L0 26 Z" fill="#d8d8d8" /><path d="M34 0 L50 13 L34 26 Z" fill="#6a6a6a" /><rect x="53" y="0" width="1.5" height="26" fill="#5c5c5c" /></svg>
    <svg width="24" height="30" viewBox="0 0 24 30" className="ml-[17px] shrink-0" fill="none"><rect x="1" y="1" width="18" height="25" fill="#363636" stroke="#c8c8c8" strokeWidth="2" /><path d="M4 6 L16 6 M4 12 L16 12 M4 17 L16 17 M4 22 L16 22" stroke="#9a9a9a" strokeWidth="3" /><path d="M23 5 L23 29 L5 29" stroke="#c8c8c8" strokeWidth="2" /></svg>
    <svg width="24" height="30" viewBox="0 0 24 30" className="ml-[27px] shrink-0" fill="none"><rect x="1" y="1" width="18" height="25" fill="#3ccb7f" stroke="#3ccb7f" strokeWidth="2" /><path d="M2 9 L18 9 M2 17 L18 17" stroke="#363636" strokeWidth="2" /><path d="M23 5 L23 29 L5 29" stroke="#c8c8c8" strokeWidth="2" /></svg>
    <div className="ml-[27px] whitespace-nowrap">
      <span className="font-bold text-[#f0f0f0]">Drag</span> to marquee select. <span className="font-bold text-[#f0f0f0]">Click</span> an object to select it.
    </div>
  </div>
);

const PagesPanel = () => (
  <div className="absolute left-[1092px] top-[74px] bottom-0 w-[1112px] bg-[#0d0d0d] z-10 flex flex-col text-[20px] text-[#b4b4b4]">
    <div className="h-[28px] shrink-0 bg-[#2c2c2c] flex items-center">
      <div className="w-[42px] pl-[19px] -mt-[16px]"><Right /></div>
      <span className="-mt-[16px] leading-[28px]">Master Pages</span>
      <svg width="116" height="22" viewBox="0 0 116 22" className="ml-auto mr-[18px]" fill="none">
        <rect x="1" y="-6" width="20" height="27" stroke="#c8c8c8" strokeWidth="2" />
        <path d="M4 4 L18 4 M4 10 L18 10 M4 16 L18 16" stroke="#c8c8c8" strokeWidth="2.5" />
        <rect x="45" y="-6" width="18" height="27" stroke="#5f5f5f" strokeWidth="2" />
        <path d="M48 4 L60 4 M48 10 L60 10 M48 16 L60 16" stroke="#6a6a6a" strokeWidth="2.5" />
        <path d="M92 -6 L92 20 L112 20 L112 -6 M98 0 L98 15 M106 0 L106 15" stroke="#5f5f5f" strokeWidth="2" />
      </svg>
    </div>
    <div className="h-[4px] shrink-0" />
    <div className="h-[44px] shrink-0 bg-[#2c2c2c] flex items-center">
      <div className="w-[42px] pl-[19px]"><Right /></div>
      <span>Pages</span>
      <svg width="188" height="30" viewBox="0 0 188 30" className="ml-auto mr-[18px]" fill="none">
        <path d="M0 3 L29 3 M0 10 L8 10 M21 10 L29 10 M0 17 L8 17 M21 17 L29 17" stroke="#e0e0e0" strokeWidth="3" />
        <path d="M9 7 L20 7 L20 28 L14.5 24 L9 28 Z" fill="#e0e0e0" />
        <path d="M82 3 L74 3 L74 28 L94 28 L94 12 M90 2 L90 12 M85 7 L95 7" stroke="#d8d8d8" strokeWidth="2" />
        <path d="M118 8 L136 8 L136 28 L118 28 Z" stroke="#6a6a6a" strokeWidth="2" />
        <path d="M124 2 L142 2 L142 22" stroke="#6a6a6a" strokeWidth="2" />
        <path d="M166 5 L188 5 M173 5 L174 1 L181 1 L182 5 M167 6 L167 28 L187 28 L187 6 M173 10 L173 24 M181 10 L181 24" stroke="#6a6a6a" strokeWidth="2" />
      </svg>
    </div>
    <svg width="26" height="38" viewBox="0 0 26 38" className="absolute left-[541px] top-[987px]"><path d="M2 2 L2 28 L8 22 L13 35 L19 32 L14 21 L23 20 Z" fill="#111" stroke="#e8e8e8" strokeWidth="2" /></svg>
  </div>
);

export default function App() {
  return (
    <div className="relative w-[3456px] h-[2234px] overflow-hidden flex flex-col bg-[#1b5488] font-['Inter',sans-serif]">
      <MenuBar />
      <div className="absolute right-0 bottom-0 w-[40px] h-[40px] bg-[#b2481c]" />
      <div className="flex h-[1px] shrink-0 relative">
        <div className="w-[790px] bg-[#2472b0]" />
        <div className="flex-1 bg-[#9a6a2a]" />
        <div className="w-[879px] bg-[#2472b0]" />
      </div>
      <div className="flex-1 min-h-0 flex flex-col rounded-[20px] overflow-hidden relative border-t border-[#111]">
        <Toolbar />
        <ContextBar />
        <div className="flex-1 min-h-0 flex">
          <ToolsCol />
          <LeftPanel />
          <Canvas />
          <RightPanel />
        </div>
        <StatusBar />
      </div>
      <PagesPanel />
    </div>
  );
}
